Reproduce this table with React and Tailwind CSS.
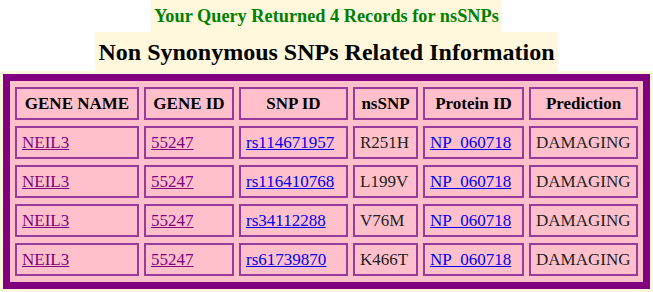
const rows = [
  { gene: 'NEIL3', id: '55247', snp: 'rs114671957', ns: 'R251H', prot: 'NP_060718', pred: 'DAMAGING' },
  { gene: 'NEIL3', id: '55247', snp: 'rs116410768', ns: 'L199V', prot: 'NP_060718', pred: 'DAMAGING' },
  { gene: 'NEIL3', id: '55247', snp: 'rs34112288', ns: 'V76M', prot: 'NP_060718', pred: 'DAMAGING' },
  { gene: 'NEIL3', id: '55247', snp: 'rs61739870', ns: 'K466T', prot: 'NP_060718', pred: 'DAMAGING' },
]

const th = "font-['Liberation_Serif',serif] h-[33px] border-2 border-[#9a3a9a] text-center align-middle font-bold p-0"
const td = "font-['Liberation_Serif',serif] h-[33px] border-2 border-[#9a3a9a] align-middle pl-[5px] p-0"

export default function App() {
  return (
    <div className="w-[653px] h-[292px] bg-white font-['Liberation_Serif',serif] overflow-hidden">
      {/* titles */}
      <div className="flex flex-col items-center">
        <div className="h-[32px] px-[3px] bg-[#fff8dc] flex items-center">
          <h3 className="text-[18.3px] font-bold text-[#008000] leading-none">
            Your Query Returned 4 Records for nsSNPs
          </h3>
        </div>
        <div className="h-[39px] px-[3px] bg-[#fff8dc] flex items-center">
          <h2 className="text-[24px] font-bold text-black leading-none">
            Non Synonymous SNPs Related Information
          </h2>
        </div>
      </div>

      {/* results table */}
      <div className="bg-[#fff8dc] p-[3px]">
        <table className="w-[647px] table-fixed border-separate border-spacing-x-[5px] border-spacing-y-[6px] border-[7px] border-[#800080] bg-[#ffc0cb] text-[17px]">
          <colgroup>
            <col className="w-[124px]" />
            <col className="w-[90px]" />
            <col className="w-[109px]" />
            <col className="w-[65px]" />
            <col className="w-[101px]" />
            <col className="w-[109px]" />
          </colgroup>
          <thead>
            <tr className="text-black">
              <th className={th}>GENE NAME</th>
              <th className={th}>GENE ID</th>
              <th className={th}>SNP ID</th>
              <th className={th}>nsSNP</th>
              <th className={th}>Protein ID</th>
              <th className={th}>Prediction</th>
            </tr>
          </thead>
          <tbody>
            {rows.map((r) => (
              <tr key={r.snp} className="text-[#222]">
                <td className={td}><a className="text-[#800080] underline">{r.gene}</a></td>
                <td className={td}><a className="text-[#800080] underline">{r.id}</a></td>
                <td className={td}><a className="text-[#0000ee] underline">{r.snp}</a></td>
                <td className={td}>{r.ns}</td>
                <td className={td}><a className="text-[#0000ee] underline">{r.prot}</a></td>
                <td className={td}>{r.pred}</td>
              </tr>
            ))}
          </tbody>
        </table>
      </div>
    </div>
  )
}
